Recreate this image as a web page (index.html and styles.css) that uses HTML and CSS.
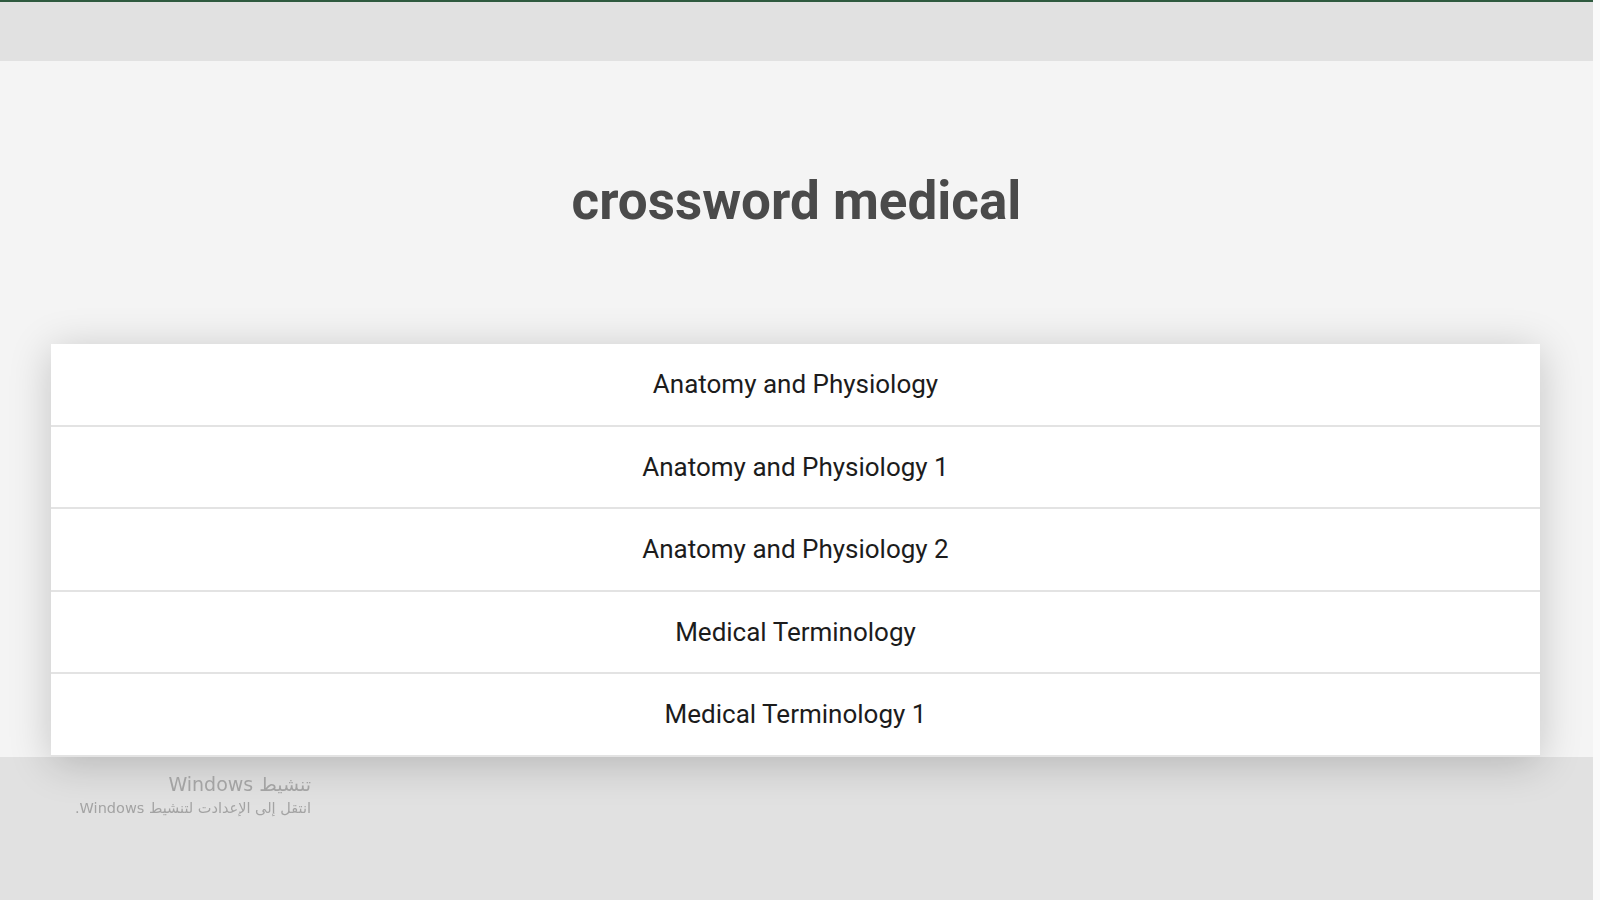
FILE: index.html
```html
<!DOCTYPE html>
<html lang="en">
<head>
  <meta charset="UTF-8">
  <meta name="viewport" content="width=device-width, initial-scale=1.0">
  <title>crossword medical</title>
  <link rel="stylesheet" href="styles.css">
</head>
<body>
  <div class="topbar"></div>

  <div class="main">
    <h1>crossword medical</h1>
    <ul class="topics">
      <li>Anatomy and Physiology</li>
      <li>Anatomy and Physiology 1</li>
      <li>Anatomy and Physiology 2</li>
      <li>Medical Terminology</li>
      <li>Medical Terminology 1</li>
    </ul>
  </div>

  <div class="activate" dir="rtl">
    <div class="activate-title">تنشيط Windows</div>
    <div class="activate-sub">انتقل إلى الإعدادت لتنشيط Windows.</div>
  </div>
</body>
</html>
```

FILE: styles.css
```css
html {
  background-color: #fafafa;
}
body {
  font-family: Roboto, 'Liberation Sans', sans-serif;
  background-color: #e1e1e1;
  margin: 0 7px 0 0;
  padding: 0;
  height: 100vh;
  overflow: hidden;
}
.topbar {
  height: 59px;
  border-top: 2px solid #2f5a3f;
  background-color: #e1e1e1;
}
.main {
  background-color: #f4f4f4;
  padding-top: 108px;
}
h1 {
  margin: 0 0 111px 0;
  font-size: 53px;
  line-height: 64px;
  font-weight: 700;
  color: #4a4a4a;
  text-align: center;
}
.topics {
  list-style: none;
  margin: 0 53px 0 51px;
  padding: 0;
  background-color: #ffffff;
  box-shadow: 0 6px 40px rgba(0, 0, 0, 0.2);
  position: relative;
}
.topics li {
  height: 80.5px;
  display: flex;
  align-items: center;
  justify-content: center;
  border-bottom: 2px solid #e3e3e3;
  font-size: 26px;
  color: #1c1c1c;
  cursor: pointer;
}
.activate {
  position: fixed;
  left: 40px;
  top: 771px;
  width: 271px;
  font-family: 'DejaVu Sans', sans-serif;
  color: #a3a3a3;
  text-align: right;
}
.activate-title {
  font-size: 19px;
  line-height: 26px;
}
.activate-sub {
  font-size: 14.5px;
  line-height: 22px;
}
```
